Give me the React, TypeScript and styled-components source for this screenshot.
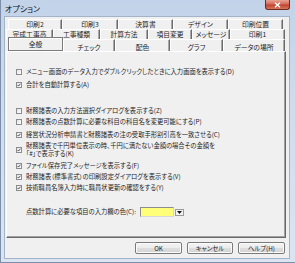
import React from "react";
import styled, { createGlobalStyle } from "styled-components";

const Global = createGlobalStyle`
  html, body { margin: 0; padding: 0; width: 295px; height: 263px; overflow: hidden; background: #fff; }
  body { font-family: "Noto Sans CJK JP", "Noto Sans", sans-serif; font-feature-settings: "palt"; color: #1e1e1e; }
  * { box-sizing: border-box; }
`;

const Window = styled.div`
  width: 295px;
  height: 263px;
  display: flex;
  flex-direction: column;
  background: linear-gradient(180deg, #c2d3e9 0%, #cfdcee 40%, #dbe5f2 100%);
  border-left: 1px solid #7d8fa8;
  border-bottom: 1px solid #7d8fa8;
`;

const TitleBar = styled.div`
  height: 17px;
  display: flex;
  align-items: flex-start;
  flex-shrink: 0;
`;

const Title = styled.div`
  padding: 4px 0 0 4px;
  font-size: 8px;
  line-height: 9px;
  color: #111;
`;

const CloseButton = styled.div`
  margin-left: auto;
  margin-right: 5px;
  width: 25px;
  height: 10px;
  display: flex;
  align-items: center;
  justify-content: center;
  background: linear-gradient(180deg, #e7a394 0%, #d36b5b 45%, #c2412c 55%, #d4785f 100%);
  border: 1px solid #6f2a20;
  border-top: none;
  border-radius: 0 0 3px 3px;
`;

const Client = styled.div`
  flex: 1;
  margin: 0 6px 4px 4px;
  background: #f0f0f0;
  box-shadow: 0 0 0 1px #a3b3c8;
  display: flex;
  flex-direction: column;
  padding: 2px 3px 4px 1px;
`;

const TabRow = styled.div<{ $h: number; $ml: number; $mr: number }>`
  display: flex;
  align-items: flex-end;
  height: ${(p) => p.$h}px;
  margin: 0 ${(p) => p.$mr}px 0 ${(p) => p.$ml}px;
  flex-shrink: 0;
`;

const Tab = styled.div<{ $w: number; $low?: boolean }>`
  width: ${(p) => p.$w}px;
  height: 100%;
  display: flex;
  align-items: center;
  justify-content: center;
  font-size: 6.8px;
  line-height: 7px;
  white-space: nowrap;
  padding-top: ${(p) => (p.$low ? 3 : 0)}px;
  border-left: 1px solid #ffffff;
  border-top: 1px solid #ffffff;
  border-right: 1px solid #6b6b6b;
  box-shadow: inset -1px 0 0 #a8a8a8;
`;

const ActiveTab = styled.div<{ $w: number }>`
  width: ${(p) => p.$w}px;
  height: 14px;
  margin-top: -2px;
  display: flex;
  align-items: center;
  justify-content: center;
  font-size: 6.8px;
  line-height: 7px;
  padding-top: 1px;
  border: 1px solid #7c7c7c;
  box-shadow: inset 1px 1px 0 #ffffff;
  background: #f0f0f0;
`;

const Panel = styled.div`
  flex: 1;
  display: flex;
  flex-direction: column;
  padding: 15px 0 0 9px;
  border-left: 1px solid #ffffff;
  border-top: 1px solid #ffffff;
  border-right: 1px solid #696969;
  border-bottom: 1px solid #696969;
  box-shadow: inset -1px -1px 0 #a0a0a0;
`;

const CheckRow = styled.div<{ $h: number; $mt: number }>`
  display: flex;
  align-items: center;
  gap: 4px;
  height: ${(p) => p.$h}px;
  margin-top: ${(p) => p.$mt}px;
  flex-shrink: 0;
`;

const Box = styled.div`
  width: 6px;
  height: 6px;
  flex-shrink: 0;
  border: 1px solid #8a8c8e;
  background: linear-gradient(135deg, #e4e4e4, #ffffff);
  display: flex;
  align-items: center;
  justify-content: center;
`;

const Label = styled.div`
  font-size: 6.3px;
  line-height: 7.5px;
  white-space: nowrap;
`;

const ColorRow = styled.div`
  display: flex;
  align-items: center;
  margin-top: 15px;
  padding-left: 10px;
  height: 10px;
`;

const ColorSwatch = styled.div`
  width: 34px;
  height: 10px;
  margin-left: 4px;
  background: #ffff7a;
  border: 1px solid #8d8d8d;
  border-right-color: #d8d8d8;
  border-bottom-color: #d8d8d8;
`;

const DropButton = styled.div`
  width: 9px;
  height: 7px;
  margin-left: 1px;
  display: flex;
  align-items: center;
  justify-content: center;
  background: #f4f4f4;
  border: 1px solid #9a9a9a;
`;

const ButtonRow = styled.div`
  display: flex;
  justify-content: flex-end;
  gap: 5px;
  margin-top: 4px;
  margin-right: 1px;
  flex-shrink: 0;
`;

const Button = styled.div<{ $w: number }>`
  width: ${(p) => p.$w}px;
  height: 12px;
  display: flex;
  align-items: center;
  justify-content: center;
  font-size: 6.3px;
  line-height: 7px;
  border: 1px solid #7a7a7a;
  border-radius: 2px;
  background: linear-gradient(180deg, #f4f4f4 0%, #ececec 48%, #dedede 52%, #d2d2d2 100%);
  box-shadow: inset 0 0 0 1px #fbfbfb;
`;

type Item = { text: string[]; checked: boolean; mt: number };

const items: Item[] = [
  { text: ["メニュー画面のデータ入力でダブルクリックしたときに入力画面を表示する(D)"], checked: false, mt: 0 },
  { text: ["合計を自動計算する(A)"], checked: true, mt: 4 },
  { text: ["財務諸表の入力方法選択ダイアログを表示する(Z)"], checked: false, mt: 17 },
  { text: ["財務諸表の点数計算に必要な科目の科目名を変更可能にする(P)"], checked: false, mt: 2 },
  { text: ["経営状況分析申請書と財務諸表の注の受取手形割引高を一致させる(C)"], checked: true, mt: 4 },
  {
    text: ["財務諸表で千円単位表示の時、千円に満たない金額の場合その金額を", "「#」で表示する(K)"],
    checked: true,
    mt: 3,
  },
  { text: ["ファイル保存完了メッセージを表示する(F)"], checked: true, mt: 4 },
  { text: ["財務諸表（標準書式）の印刷設定ダイアログを表示する(V)"], checked: true, mt: 2 },
  { text: ["技術職員名簿入力時に職員状更新の確認をする(Y)"], checked: true, mt: 2 },
];

const Check = () => (
  <svg width="6" height="6" viewBox="0 0 6 6">
    <path d="M0.8 3 L2.3 4.6 L5.2 1.1" fill="none" stroke="#1e1e1e" strokeWidth="1.1" />
  </svg>
);

const row1 = [
  { t: "印刷2", w: 54 },
  { t: "印刷3", w: 56 },
  { t: "決算書", w: 55 },
  { t: "デザイン", w: 55 },
  { t: "印刷位置", w: 55 },
];
const row2 = [
  { t: "完成工事高", w: 47 },
  { t: "工事種類", w: 47 },
  { t: "計算方法", w: 48 },
  { t: "項目変更", w: 44 },
  { t: "メッセージ", w: 38 },
  { t: "印刷1", w: 55 },
];
const row3 = [
  { t: "チェック", w: 52 },
  { t: "配色", w: 55 },
  { t: "グラフ", w: 53 },
  { t: "データの場所", w: 62 },
];

export default function App() {
  return (
    <>
      <Global />
      <Window>
        <TitleBar>
          <Title>オプション</Title>
          <CloseButton>
            <svg width="7" height="6" viewBox="0 0 7 6">
              <path d="M1 0.8 L6 5.2 M6 0.8 L1 5.2" stroke="#ffffff" strokeWidth="1.4" />
            </svg>
          </CloseButton>
        </TitleBar>
        <Client>
          <TabRow $h={10} $ml={2} $mr={3}>
            {row1.map((t) => (
              <Tab key={t.t} $w={t.w}>{t.t}</Tab>
            ))}
          </TabRow>
          <TabRow $h={10} $ml={0} $mr={1}>
            {row2.map((t) => (
              <Tab key={t.t} $w={t.w}>{t.t}</Tab>
            ))}
          </TabRow>
          <TabRow $h={12} $ml={2} $mr={1}>
            <ActiveTab $w={55}>全般</ActiveTab>
            {row3.map((t) => (
              <Tab key={t.t} $w={t.w} $low>{t.t}</Tab>
            ))}
          </TabRow>
          <Panel>
            {items.map((it, i) => (
              <CheckRow key={i} $h={it.text.length > 1 ? 15 : 9} $mt={it.mt}>
                <Box>{it.checked && <Check />}</Box>
                <Label>
                  {it.text.map((line, j) => (
                    <React.Fragment key={j}>
                      {j > 0 && <br />}
                      {line}
                    </React.Fragment>
                  ))}
                </Label>
              </CheckRow>
            ))}
            <ColorRow>
              <Label>点数計算に必要な項目の入力欄の色(C):</Label>
              <ColorSwatch />
              <DropButton>
                <svg width="5" height="3" viewBox="0 0 5 3">
                  <path d="M0 0 H5 L2.5 3 Z" fill="#111" />
                </svg>
              </DropButton>
            </ColorRow>
          </Panel>
          <ButtonRow>
            <Button $w={47}>OK</Button>
            <Button $w={46}>キャンセル</Button>
            <Button $w={47}>ヘルプ(H)</Button>
          </ButtonRow>
        </Client>
      </Window>
    </>
  );
}
